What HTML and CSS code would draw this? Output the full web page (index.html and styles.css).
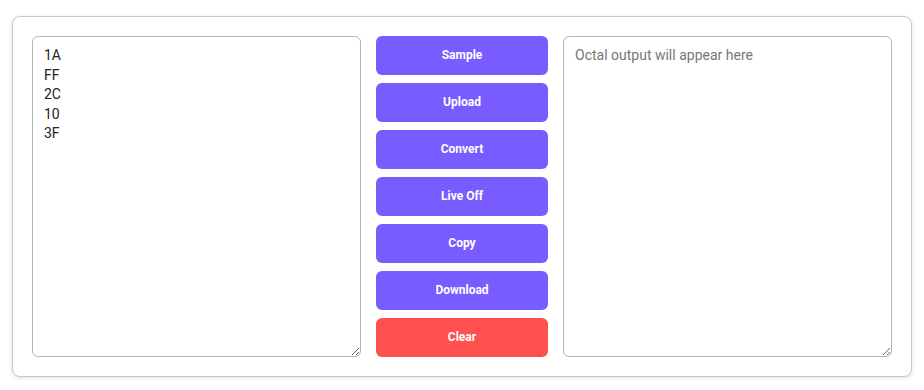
FILE: index.html
```html
<!DOCTYPE html>
<html lang="en">
<head>
  <meta charset="UTF-8" />
  <meta name="viewport" content="width=device-width, initial-scale=1.0"/>
  <title>Hex to Octal Converter</title>
  <link rel="stylesheet" href="styles.css">
</head>
<body>
  <div class="container">
    <textarea class="box" id="input">1A
FF
2C
10
3F</textarea>

    <div class="actions">
      <button class="btn">Sample</button>
      <button class="btn">Upload</button>
      <button class="btn">Convert</button>
      <button class="btn">Live Off</button>
      <button class="btn">Copy</button>
      <button class="btn">Download</button>
      <button class="btn danger">Clear</button>
    </div>

    <textarea class="box" id="output" placeholder="Octal output will appear here" readonly></textarea>
  </div>
</body>
</html>
```

FILE: styles.css
```css
* {
  margin: 0;
  padding: 0;
  box-sizing: border-box;
  font-family: Roboto, 'Liberation Sans', sans-serif;
}

body {
  background: #fff;
  padding: 16px 12px;
}

.container {
  width: 900px;
  height: 361px;
  display: flex;
  gap: 15px;
  padding: 19px;
  background: #fff;
  border: 1px solid #c8c8c8;
  border-radius: 8px;
  box-shadow: 0 1px 4px rgba(0, 0, 0, 0.12);
}

.box {
  flex: 1;
  height: 321px;
  padding: 9px 11px;
  border: 1px solid #b5b5b5;
  border-radius: 6px;
  font-size: 14px;
  line-height: 1.4;
  color: #222;
  resize: vertical;
  outline: none;
}

.box::placeholder {
  color: #777;
}

.actions {
  width: 172px;
  display: flex;
  flex-direction: column;
  gap: 8px;
}

.btn {
  height: 39px;
  padding-bottom: 1px;
  background-color: #785cff;
  color: #fff;
  border: none;
  border-radius: 6px;
  font-size: 12px;
  font-weight: bold;
  cursor: pointer;
}

.btn.danger {
  background-color: #ff5050;
}
```
